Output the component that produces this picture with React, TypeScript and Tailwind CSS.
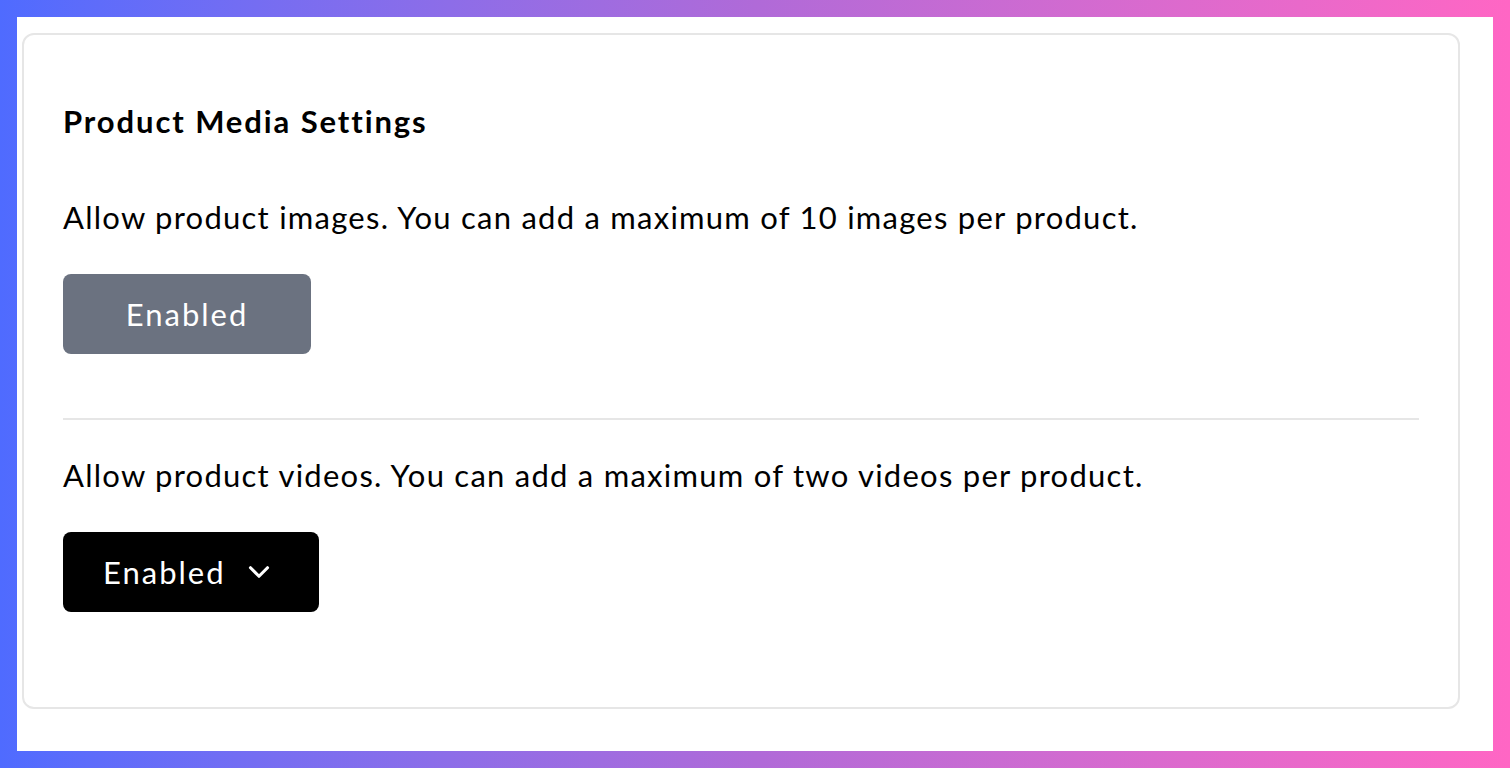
import { FC } from 'react';
import { ChevronDown } from 'lucide-react';

const App: FC = () => {
  return (
    <div
      className="h-[768px] w-[1510px] bg-gradient-to-r from-[#4f6bff] via-[#b06ad8] to-[#ff66c4] p-[17px]"
      style={{ fontFamily: 'Lato, "Noto Sans", sans-serif' }}
    >
      <div className="h-full w-full bg-white pl-[5px] pt-[16px]">
        {/* settings card */}
        <section className="h-[676px] w-[1438px] rounded-[12px] border-2 border-[#e6e6e6] px-[39px] pt-[65px]">
          <h2 className="text-[31px] font-bold leading-[42px] tracking-[1.9px] text-black">
            Product Media Settings
          </h2>

          <p className="mt-[54px] text-[31px] leading-[42px] tracking-[1.25px] text-black">
            Allow product images. You can add a maximum of 10 images per product.
          </p>
          <button className="mt-[36px] flex h-[80px] w-[248px] items-center justify-center rounded-[8px] bg-[#6b7280] text-[31px] tracking-[2px] text-white">
            Enabled
          </button>

          <hr className="mt-[64px] border-t-2 border-[#e6e6e6]" />

          <p className="mt-[34px] text-[31px] leading-[42px] tracking-[1.25px] text-black">
            Allow product videos. You can add a maximum of two videos per product.
          </p>
          <button className="mt-[36px] flex h-[80px] w-[256px] items-center rounded-[8px] bg-black pl-[40px] text-[31px] tracking-[2px] text-white">
            Enabled
            <ChevronDown size={34} strokeWidth={2.2} className="ml-[16px]" />
          </button>
        </section>
      </div>
    </div>
  );
};

export default App;
